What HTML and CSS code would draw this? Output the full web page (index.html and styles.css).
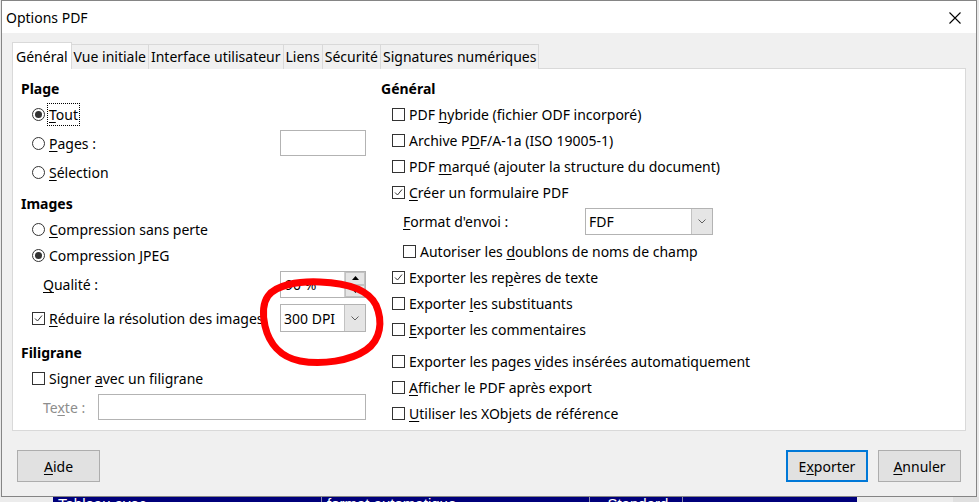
FILE: index.html
```html
<!DOCTYPE html>
<html lang="fr">
<head>
<meta charset="utf-8">
<title>Options PDF</title>
<link rel="stylesheet" href="styles.css">
</head>
<body>
<div class="dialog">
  <div class="titlebar">
    <span class="title">Options PDF</span>
    <svg class="close" width="12" height="12" viewBox="0 0 12 12"><path d="M0.5 0.5 L11.5 11.5 M11.5 0.5 L0.5 11.5" stroke="#000" stroke-width="1.1" fill="none"/></svg>
  </div>
  <div class="body">
    <div class="tabs">
      <div class="tab active">Général</div>
      <div class="tab">Vue initiale</div>
      <div class="tab">Interface utilisateur</div>
      <div class="tab">Liens</div>
      <div class="tab">Sécurité</div>
      <div class="tab">Signatures numériques</div>
    </div>
    <div class="panel">
      <div class="col left">
        <div class="row head">Plage</div>
        <div class="row ind"><span class="radio on"></span><span class="lbl focus"><u>T</u>out</span></div>
        <div class="row ind mt3 split">
          <span class="item"><span class="radio"></span><span class="lbl"><u>P</u>ages :</span></span>
          <span class="field small"></span>
        </div>
        <div class="row ind mt3"><span class="radio"></span><span class="lbl"><u>S</u>élection</span></div>
        <div class="row head mt6">Images</div>
        <div class="row ind"><span class="radio"></span><span class="lbl"><u>C</u>ompression sans perte</span></div>
        <div class="row ind"><span class="radio on"></span><span class="lbl">Compression <u>J</u>PEG</span></div>
        <div class="row ind2 mt3 split h27">
          <span class="lbl"><u>Q</u>ualité :</span>
          <span class="spin">
            <span class="spin-text">90 %</span>
            <span class="spin-btns">
              <span class="spin-btn"><svg width="7" height="4" viewBox="0 0 7 4"><polygon points="0,4 3.5,0 7,4" fill="#000"/></svg></span>
              <span class="spin-btn"><svg width="7" height="4" viewBox="0 0 7 4"><polygon points="0,0 3.5,4 7,0" fill="#000"/></svg></span>
            </span>
          </span>
        </div>
        <div class="row ind mt6 split h28">
          <span class="item"><span class="check on"><svg width="11" height="11" viewBox="0 0 11 11"><polyline points="2,5.5 4.5,8 9,2.5" fill="none" stroke="#333" stroke-width="1"/></svg></span><span class="lbl"><u>R</u>éduire la résolution des images</span></span>
          <span class="combo small"><span class="combo-text">300 DPI</span><span class="combo-btn"><svg width="8" height="5" viewBox="0 0 8 5"><polyline points="0.5,0.5 4,4 7.5,0.5" fill="none" stroke="#606060" stroke-width="1"/></svg></span></span>
        </div>
        <div class="row head mt8">Filigrane</div>
        <div class="row ind"><span class="check"></span><span class="lbl">Signer <u>a</u>vec un filigrane</span></div>
        <div class="row ind2 mt3 split">
          <span class="lbl disabled">Te<u>x</u>te :</span>
          <span class="field wide"></span>
        </div>
      </div>
      <div class="col right">
        <div class="row head">Général</div>
        <div class="row ind"><span class="check"></span><span class="lbl">PDF <u>h</u>ybride (fichier ODF incorporé)</span></div>
        <div class="row ind"><span class="check"></span><span class="lbl">Archive P<u>D</u>F/A-1a (ISO 19005-1)</span></div>
        <div class="row ind"><span class="check"></span><span class="lbl">PDF <u>m</u>arqué (ajouter la structure du document)</span></div>
        <div class="row ind"><span class="check on"><svg width="11" height="11" viewBox="0 0 11 11"><polyline points="2,5.5 4.5,8 9,2.5" fill="none" stroke="#333" stroke-width="1"/></svg></span><span class="lbl"><u>C</u>réer un formulaire PDF</span></div>
        <div class="row ind2 mt3 h27">
          <span class="lbl fmt"><u>F</u>ormat d'envoi :</span>
          <span class="combo fmtbox"><span class="combo-text">FDF</span><span class="combo-btn"><svg width="8" height="5" viewBox="0 0 8 5"><polyline points="0.5,0.5 4,4 7.5,0.5" fill="none" stroke="#606060" stroke-width="1"/></svg></span></span>
        </div>
        <div class="row ind2 mt3"><span class="check"></span><span class="lbl">Autoriser les <u>d</u>oublons de noms de champ</span></div>
        <div class="row ind"><span class="check on"><svg width="11" height="11" viewBox="0 0 11 11"><polyline points="2,5.5 4.5,8 9,2.5" fill="none" stroke="#333" stroke-width="1"/></svg></span><span class="lbl">Exporter les re<u>p</u>ères de texte</span></div>
        <div class="row ind"><span class="check"></span><span class="lbl">Exporter <u>l</u>es substituants</span></div>
        <div class="row ind"><span class="check"></span><span class="lbl"><u>E</u>xporter les commentaires</span></div>
        <div class="row ind mt6"><span class="check"></span><span class="lbl">Exporter les pages <u>v</u>ides insérées automatiquement</span></div>
        <div class="row ind"><span class="check"></span><span class="lbl"><u>A</u>fficher le PDF après export</span></div>
        <div class="row ind"><span class="check"></span><span class="lbl"><u>U</u>tiliser les XObjets de référence</span></div>
      </div>
    </div>
    <div class="buttons">
      <button class="btn"><u>A</u>ide</button>
      <span class="spacer"></span>
      <button class="btn default">E<u>x</u>porter</button>
      <button class="btn"><u>A</u>nnuler</button>
    </div>
  </div>
</div>
<div class="backdrop">
  <div class="doc">
    <span class="cell c1">Tableau avec</span>
    <span class="cell c2">format automatique</span>
    <span class="cell c3">« Standard »</span>
    <span class="cell c4"></span>
  </div>
</div>
<svg class="scribble" width="140" height="100" viewBox="0 0 140 100">
  <path d="M18 26 C26 15 48 11 70 12 C96 13 118 19 126 35 C133 51 131 70 116 80 C100 91 72 95 50 91 C30 87 19 73 15 56 C12 42 13 33 18 26 Z" fill="none" stroke="#ff0000" stroke-width="7" stroke-linejoin="round"/>
</svg>
</body>
</html>
```

FILE: styles.css
```css
* { box-sizing: border-box; }
html, body { margin: 0; padding: 0; }
body {
  width: 979px;
  height: 502px;
  overflow: hidden;
  position: relative;
  background: #e9e9e9;
  font-family: "Segoe UI", "Noto Sans", sans-serif;
  font-size: 14px;
  color: #000;
}
u { text-decoration: underline; text-underline-offset: 2px; }

.dialog {
  margin-left: 1px;
  width: 976px;
  height: 497px;
  border: 1px solid #858585;
  background: #f0f0f0;
  display: flex;
  flex-direction: column;
}
.titlebar {
  height: 32px;
  flex: none;
  background: #fff;
  display: flex;
  align-items: center;
  justify-content: space-between;
  padding: 1px 15px 0 4px;
  font-size: 14px;
}
.close { display: block; }

.body {
  flex: 1;
  display: flex;
  flex-direction: column;
  padding: 9px 10px 14px 10px;
}
.tabs {
  height: 27px;
  display: flex;
  align-items: flex-end;
  position: relative;
  z-index: 1;
}
.tab {
  height: 25px;
  line-height: 23px;
  padding: 0 2px;
  border: 1px solid #d9d9d9;
  border-left: none;
  border-bottom: none;
  background: #f0f0f0;
  white-space: nowrap;
}
.tab.active {
  height: 27px;
  line-height: 27px;
  background: #fff;
  border-left: 1px solid #d9d9d9;
  padding: 0 3px;
}
.panel {
  margin-top: -1px;
  height: 363px;
  flex: none;
  background: #fff;
  border: 1px solid #d9d9d9;
  padding: 7px 0 0 8px;
  display: flex;
}
.col { display: flex; flex-direction: column; }
.col.left { width: 345px; }
.col.right { margin-left: 15px; width: 520px; }

.row {
  height: 26px;
  display: flex;
  align-items: center;
  white-space: nowrap;
  flex: none;
}
.row.head { height: 25px; font-weight: bold; }
.row.ind { padding-left: 11px; }
.row.ind2 { padding-left: 22px; }
.row.split { justify-content: space-between; }
.row.h27 { height: 27px; }
.row.h28 { height: 28px; }
.mt3 { margin-top: 3px; }
.mt6 { margin-top: 6px; }
.mt8 { margin-top: 8px; }
.item { display: flex; align-items: center; }

.radio {
  width: 13px;
  height: 13px;
  border: 1px solid #333;
  border-radius: 50%;
  background: #fff;
  margin-right: 4px;
  flex: none;
  display: flex;
  align-items: center;
  justify-content: center;
}
.radio.on::after {
  content: "";
  width: 7px;
  height: 7px;
  border-radius: 50%;
  background: #333;
}
.check {
  width: 13px;
  height: 13px;
  border: 1px solid #333;
  background: #fff;
  margin-right: 4px;
  flex: none;
  display: flex;
  align-items: center;
  justify-content: center;
}
.check svg { display: block; }
.lbl.focus { outline: 1px dotted #000; outline-offset: 1px; }
.lbl.disabled { color: #8d8d8d; }
.lbl.fmt { width: 182px; }

.field {
  height: 26px;
  border: 1px solid #b3b3b3;
  background: #fff;
}
.field.small { width: 86px; }
.field.wide { width: 268px; }

.spin {
  width: 86px;
  height: 27px;
  border: 1px solid #b3b3b3;
  background: #fff;
  display: flex;
}
.spin-text { flex: 1; padding-left: 4px; line-height: 25px; }
.spin-btns { width: 21px; display: flex; flex-direction: column; border-left: 1px solid #d0d0d0; }
.spin-btn {
  flex: 1;
  background: #e5e5e5;
  border: 1px solid #c2c2c2;
  display: flex;
  align-items: center;
  justify-content: center;
}
.spin-btn svg { display: block; }

.combo {
  height: 28px;
  border: 1px solid #b3b3b3;
  background: #fff;
  display: flex;
}
.combo.small { width: 86px; }
.combo.fmtbox { width: 128px; height: 27px; }
.combo-text { flex: 1; padding-left: 3px; display: flex; align-items: center; }
.combo-btn {
  width: 21px;
  background: #e5e5e5;
  border-left: 1px solid #c2c2c2;
  display: flex;
  align-items: center;
  justify-content: center;
}
.combo-btn svg { display: block; }

.buttons {
  margin-top: 19px;
  display: flex;
  padding: 0 5px;
  gap: 10px;
}
.spacer { flex: 1; }
.btn {
  width: 83px;
  height: 32px;
  background: #e1e1e1;
  border: 1px solid #adadad;
  font-family: inherit;
  font-size: 14px;
  color: #000;
  padding: 0;
}
.btn.default { width: 82px; border: 2px solid #0078d7; }

.backdrop {
  height: 5px;
  overflow: hidden;
  background: #ececec;
  position: relative;
  border-right: 26px solid #e0e0e0;
}
.doc {
  margin-left: 53px;
  width: 804px;
  height: 5px;
  background: #00007b;
  display: flex;
  color: #fff;
  font-family: "Liberation Sans", sans-serif;
  font-size: 15px;
  line-height: 16px;
}
.cell { margin-top: -1px; padding-left: 5px; white-space: nowrap; overflow: hidden; border-right: 1px solid #8a8ab0; }
.c1 { width: 269px; }
.c2 { width: 268px; }
.c3 { width: 93px; }
.c4 { flex: 1; border-right: none; }

.scribble {
  position: absolute;
  left: 250px;
  top: 270px;
}
```
